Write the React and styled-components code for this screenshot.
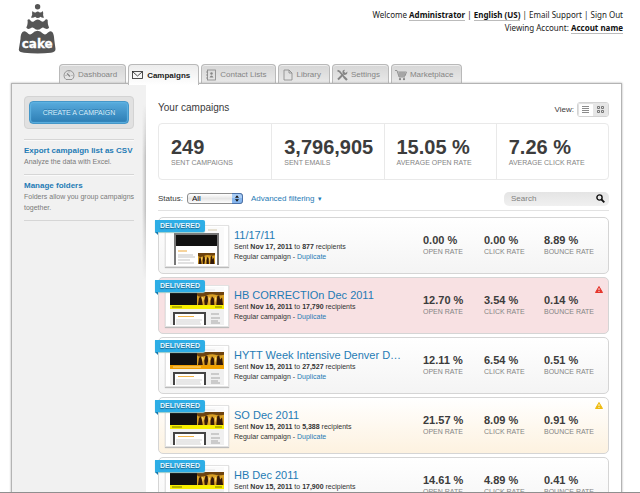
import React from "react";
import styled, { createGlobalStyle, css } from "styled-components";

const Global = createGlobalStyle`
  *, *::before, *::after { box-sizing: border-box; }
  body {
    margin: 0;
    background: #fff;
    color: #3a3a3a;
    font-family: "Liberation Sans", Arial, Helvetica, sans-serif;
    font-size: 8px;
  }
  h1, h2, h3, p, ul, dl, dd { margin: 0; padding: 0; }
  a { color: #1f7bb5; text-decoration: none; }
  button, input, select { font: inherit; }
`;

const Page = styled.div`
  display: flex;
  flex-direction: column;
  height: 100vh;
  overflow: hidden;
  border-bottom: 1px solid #8f8f8f;
`;

const Header = styled.header`
  display: flex;
  flex: none;
  justify-content: space-between;
  align-items: flex-start;
  height: 64px;
  padding: 4px 17px 0 18px;
`;

const Account = styled.div`
  padding-top: 4px;
  font-family: "Noto Sans", "Open Sans", sans-serif;
  font-size: 8px;
  line-height: 13px;
  text-align: right;
  color: #222;
`;

const AccountLink = styled.a`
  color: #222;
  ${(p) =>
    p.$strong &&
    css`
      color: #111;
      font-weight: 700;
      border-bottom: 1px solid #bbb;
    `}
`;

const Tabs = styled.nav`
  display: flex;
  flex: none;
  gap: 2px;
  padding-left: 59px;
  height: 19px;
`;

const Tab = styled.a`
  display: flex;
  align-items: center;
  gap: 3px;
  height: 19px;
  padding: 1px 8px 0 3px;
  border: 1px solid #b9b9b9;
  border-bottom: 0;
  border-radius: 4px 4px 0 0;
  background: linear-gradient(#d6d6d6, #e9e9e9);
  box-shadow: inset 0 1px 0 #eee;
  color: #858585;
  font-size: 8px;
  white-space: nowrap;
  ${(p) =>
    p.$active &&
    css`
      position: relative;
      z-index: 1;
      height: 21px;
      padding-bottom: 1px;
      background: linear-gradient(#ececec, #fff);
      color: #222;
      font-weight: 700;
    `}
`;

const Panel = styled.div`
  display: flex;
  flex: 1 0 auto;
  margin: 0 18px 0 11px;
  border: 1px solid #b4b4b4;
  border-bottom: 0;
  box-shadow: 0 0 2px #aaa;
  background: #fff;
`;

const Sidebar = styled.aside`
  position: relative;
  flex: none;
  width: 134px;
  padding: 12px 12px 0;
  background: #f1f1f1;
  &::after {
    content: "";
    position: absolute;
    top: 20px;
    right: 0;
    width: 4px;
    height: 176px;
    background: linear-gradient(to right, transparent, #bdbdbd);
    mask-image: linear-gradient(transparent, #000 30%, #000 60%, transparent);
  }
`;

const CreateWell = styled.div`
  padding: 4px;
  margin-bottom: 10px;
  border: 1px solid #d3d3d3;
  border-radius: 4px;
  background: #e1e1e1;
`;

const CreateButton = styled.button`
  display: block;
  width: 100%;
  height: 23px;
  padding: 0;
  border: 1px solid #4597c8;
  border-radius: 4px;
  background: linear-gradient(#58abdd, #2c7db4);
  box-shadow: inset 0 0 1px 1px #5fb2e2;
  color: #d9effb;
  font-size: 7px;
  text-shadow: 0 -1px 0 #2a78ad;
`;

const SideItem = styled.section`
  padding: 5px 0 7px;
  border-top: 1px solid #d6d6d6;
  box-shadow: inset 0 1px 0 #fafafa;
  &:last-child {
    border-bottom: 1px solid #d6d6d6;
  }
`;

const SideLink = styled.a`
  display: block;
  font-size: 8px;
  font-weight: 700;
  line-height: 11px;
  white-space: nowrap;
`;

const SideText = styled.p`
  margin-right: -8px;
  color: #7a7a7a;
  font-size: 7px;
  line-height: 11px;
`;

const Main = styled.main`
  flex: 1;
  min-width: 0;
  padding: 18px 12px 0;
`;

const Row = styled.div`
  display: flex;
  align-items: center;
`;

const TitleRow = styled(Row)`
  justify-content: space-between;
  align-items: flex-start;
  height: 21px;
`;

const Title = styled.h1`
  font-size: 10px;
  font-weight: 400;
  line-height: 12px;
`;

const ViewPicker = styled(Row)`
  gap: 3px;
  font-size: 8px;
`;

const Toggle = styled.div`
  display: flex;
  height: 15px;
  border: 1px solid #d3d3d3;
  border-radius: 3px;
  overflow: hidden;
`;

const ToggleButton = styled.button`
  display: grid;
  place-items: center;
  width: 15px;
  padding: 0;
  border: 0;
  background: ${(p) => (p.$active ? "#fff" : "#e6e6e6")};
  color: ${(p) => (p.$active ? "#8b8b8b" : "#777")};
  box-shadow: ${(p) => (p.$active ? "inset 1px 1px 1px #ddd" : "none")};
`;

const Totals = styled.dl`
  display: grid;
  grid-template-columns: repeat(4, 1fr);
  height: 57px;
  border: 1px solid #e9e9e9;
  border-radius: 4px;
`;

const Total = styled.div`
  display: flex;
  flex-direction: column-reverse;
  justify-content: flex-end;
  padding: 13px 0 0 12px;
  white-space: nowrap;
  & + & {
    border-left: 1px solid #e9e9e9;
  }
`;

const TotalValue = styled.dd`
  font-size: 20px;
  font-weight: 700;
  line-height: 21px;
  color: #3c3c3c;
`;

const Caption = styled.dt`
  color: #858585;
  font-size: 7px;
  line-height: 10px;
`;

const Filters = styled(Row)`
  height: 31px;
  margin-bottom: 6px;
  padding-top: 7px;
  border-bottom: 1px solid #e2e2e2;
  font-size: 8px;
`;

const SelectBox = styled.div`
  position: relative;
  display: flex;
  margin: 0 8px 0 4px;
  svg {
    position: absolute;
    top: 0;
    right: 0;
    pointer-events: none;
  }
`;

const Select = styled.select`
  appearance: none;
  width: 56px;
  height: 11px;
  padding: 0 0 0 4px;
  border: 1px solid #8e8e8e;
  border-radius: 3px;
  background: linear-gradient(#fff, #e6e6e6 50%, #fdfdfd);
  color: #111;
  font-size: 8px;
  line-height: 9px;
`;

const FilterLink = styled.a`
  span { font-size: 6px; }
`;

const Search = styled.label`
  display: flex;
  align-items: center;
  width: 105px;
  height: 14px;
  margin-left: auto;
  padding: 0 4px 0 7px;
  border-radius: 5px;
  background: linear-gradient(#e4e4e4, #f0f0f0);
`;

const SearchInput = styled.input`
  flex: 1;
  min-width: 0;
  padding: 0;
  border: 0;
  outline: 0;
  background: transparent;
  font-size: 8px;
  &::placeholder { color: #808080; }
`;

const List = styled.ul`
  display: grid;
  gap: 3px;
  list-style: none;
`;

const tones = {
  plain: "linear-gradient(#fff, #f4f4f4)",
  danger: "#f8e1e3",
  warning: "linear-gradient(#fff, #fdf2e0)",
};

const Card = styled.li`
  position: relative;
  display: flex;
  height: 57px;
  padding: 7px 0 0 6px;
  border: 1px solid #d5d5d5;
  border-radius: 5px;
  background: ${(p) => tones[p.$tone]};
`;

const Badge = styled.span`
  position: absolute;
  top: 2px;
  left: -4px;
  width: 50px;
  height: 12px;
  border-radius: 0 2px 2px 0;
  background: #2eaee6;
  box-shadow: 0 1px 1px #9cc;
  color: #e8f7ff;
  font-size: 7px;
  font-weight: 700;
  line-height: 12px;
  text-align: center;
  text-shadow: 0 1px 1px #17648c;
  &::after {
    content: "";
    position: absolute;
    top: 12px;
    left: 0;
    border-top: 3px solid #167bb0;
    border-left: 3px solid transparent;
  }
`;

const Preview = styled.div`
  flex: none;
  width: 64px;
  height: 42px;
  padding: 1px 4px;
  border: 1px solid #e2e2e2;
  background: #fff;
  box-shadow: 0 1px 1px #bbb;
  svg { display: block; }
`;

const Info = styled.div`
  flex: 1;
  min-width: 0;
  padding: 4px 0 0 5px;
  color: #333;
  font-size: 7px;
  line-height: 10px;
  white-space: nowrap;
`;

const Name = styled.h2`
  font-size: 11px;
  font-weight: 400;
  line-height: 13px;
`;

const Rates = styled.dl`
  display: grid;
  flex: none;
  grid-template-columns: 61px 60px 64px;
  padding-top: 9px;
`;

const Rate = styled.div`
  display: flex;
  flex-direction: column-reverse;
  justify-content: flex-end;
  white-space: nowrap;
`;

const RateValue = styled.dd`
  font-size: 11px;
  font-weight: 700;
  line-height: 13px;
  color: #3c3c3c;
`;

const Alert = styled.svg`
  position: absolute;
  top: ${(p) => (p.$tone === "danger" ? 8 : 4)}px;
  right: 5px;
`;

const Logo = () => (
  <svg width="38" height="50" viewBox="0 0 38 50" role="img" aria-label="cake">
    <g fill="#555">
      <circle cx="19.600" cy="2.800" r="2.700" />
      <path d="M14.500 7q1.800 2 3.200 1.500 2-2 4 0 1.400.5 3-1.500 1 2.500.4 4 .3 1.500.9 2.500-1.500 1-3.500-.8-1.200 1.300-2.800 1.300-1.500 0-2.500-1.300-2 1.800-4.200.8.800-1.500 1.200-2.800-.4-2 .3-3.700z" />
      <path d="M9.500 16q1.500-1.500 3 .5 1.700 2 3.500.7 3.800-3.400 7.300 0 2 1.200 3.400-.7 1.500-2 3-.5 0 2.500.2 4 .5 2 1.200 3.500-1 2.500-4.600.8-1.500-1.500-3.200 0-3.700 3-7.200 0-2-1.500-3.500 0-3.200 1.600-4.300-.8 1-2 1.200-3.500.4-2 0-4z" />
      <path d="M4.500 28q2.500-2 4.800.8 2.200 3 4.500 1 5.700-6 11.400 0 2.300 2 4.500-1 2.300-2.600 4.600-.8 1.700 2 2 8l1.200 9q0 3.200-4.500 3.700-13 1.500-27 0Q.7 48.500.8 45.500L2.500 35q0-5 2-7z" />
    </g>
    <text x="19.200" y="43.500" textAnchor="middle" fill="#fff" stroke="#fff" strokeWidth=".3" fontFamily="DejaVu Sans, sans-serif" fontWeight="700" fontSize="12">cake</text>
  </svg>
);

const iconArt = {
  Dashboard: (
    <>
      <path d="M3 10.500a5 5 0 1 1 6 0z" fill="none" />
      <path d="M4 4.500l3 3" strokeWidth="1.300" fill="none" />
      <path d="M2.500 6.500h1M8.500 6.500h1M6 2.500v1" fill="none" />
    </>
  ),
  Campaigns: (
    <>
      <rect x=".5" y="2.500" width="10" height="7" fill="none" />
      <path d="M1 3l4.500 4L10 3" fill="none" />
    </>
  ),
  "Contact Lists": (
    <>
      <rect x="2.500" y="1" width="8" height="10" fill="none" />
      <circle cx="6.500" cy="4.500" r="1.200" fill="currentColor" stroke="none" />
      <path d="M4.500 8.500q2-4 4 0z" fill="currentColor" stroke="none" />
      <path d="M1 3h2M1 6h2M1 9h2" fill="none" />
    </>
  ),
  Library: <path d="M2 1h5l3 3v7H2zM7 1v3h3" fill="none" />,
  Settings: (
    <>
      <path d="M1.500 1.500l2 1 5 6" strokeWidth="1.600" fill="none" />
      <path d="M2 10.500l5-5" strokeWidth="2" fill="none" />
      <path d="M11.500 2.500L9.500 4 8 2.800 9 .8Q6 .8 6.500 4T11 5z" fill="currentColor" stroke="none" />
      <path d="M8 8l3 3" strokeWidth="2.200" fill="none" />
    </>
  ),
  Marketplace: (
    <>
      <path d="M0 1.500h2l2 6.500h6M2.500 3h9L10 7H4M5 3v4M7 3v4M9 3v4M3 5h8" fill="none" />
      <circle cx="5" cy="10.200" r="1.100" fill="currentColor" stroke="none" />
      <circle cx="9" cy="10.200" r="1.100" fill="currentColor" stroke="none" />
    </>
  ),
};

const TabIcon = ({ name }) => (
  <svg width="12" height="12" viewBox="0 0 12 12" stroke="currentColor" strokeWidth=".8" aria-hidden="true">
    {iconArt[name]}
  </svg>
);

const People = ({ x, y, w, h }) => (
  <svg x={x} y={y} width={w} height={h} viewBox="0 0 28 12" preserveAspectRatio="none">
    <rect width="28" height="12" fill="#d9a024" />
    <path d="M0 0h28v2.500q-5 1-9 0t-10 1T0 3z" fill="#6d430f" />
    <path d="M1 12l1-6 1.500-2 1.500 3 1 5zM8 12l-.5-4L9 3l2 1 .5 4-1 4zM14 12V8l1.500-4 2 2 .5 6zM20 12l1-8 2-1 1 4 2-2 1 7z" fill="#33190a" />
    <path d="M5 4l2 2-1 3zM12 4l1.500 2-1 5zM18.500 4l1.500 2-1 4z" fill="#fbd873" />
  </svg>
);

const Thumb = ({ kind }) => {
  if (kind === "single")
    return (
      <svg width="54" height="38" viewBox="0 0 54 38" aria-hidden="true">
        <rect width="54" height="38" fill="#fafafa" />
        <path d="M38 3h9" stroke="#d2c7a8" />
        <path d="M5 38V7h43v31" fill="#fff" stroke="#777" strokeWidth="2" />
        <rect x="6" y="8" width="41" height="11" fill="#111" />
        <path d="M8 24h9" stroke="#eda83b" />
        <path d="M8 28h15M8 30h17M8 33h12M8 36h16" stroke="#aaa" strokeWidth=".7" />
        <People x={28} y={26} w={17} h={11} />
      </svg>
    );
  const orange = kind === "orange";
  return (
    <svg width="54" height="38" viewBox="0 0 54 38" aria-hidden="true">
      <rect width="54" height="38" fill="#fafafa" />
      <path d="M35 3h10" stroke="#ddd" strokeWidth=".7" />
      <rect y="5" width="54" height="13" fill="#111" />
      <People x={27} y={5} w={27} h={13} />
      <rect y="18" width="54" height="4" fill={orange ? "#f0a000" : "#f7ee00"} />
      <path d={orange ? "M3 20h28" : "M2 20h10M45 20h7"} stroke={orange ? "#ffd98a" : "#777a00"} />
      <rect y="22" width="54" height="16" fill="#f0f0f0" />
      <path d="M4 38V26h31v12" fill="#fff" stroke="#444" strokeWidth="2" />
      <path d="M8 29.500h16" stroke="#efb248" strokeWidth="1" />
      <path d="M6 33h26M6 35h24M6 37h25" stroke="#bbb" strokeWidth=".7" />
      <path d="M41 27h8M41 31h9M41 34h7M41 36h9" stroke="#888" strokeWidth=".7" />
    </svg>
  );
};

const tabs = ["Dashboard", "Campaigns", "Contact Lists", "Library", "Settings", "Marketplace"];

const totals = [
  ["249", "SENT CAMPAIGNS"],
  ["3,796,905", "SENT EMAILS"],
  ["15.05 %", "AVERAGE OPEN RATE"],
  ["7.26 %", "AVERAGE CLICK RATE"],
];

const campaigns = [
  { name: "11/17/11", date: "Nov 17, 2011", count: "877", rates: ["0.00 %", "0.00 %", "8.89 %"], tone: "plain", kind: "single" },
  { name: "HB CORRECTIOn Dec 2011", date: "Nov 16, 2011", count: "17,790", rates: ["12.70 %", "3.54 %", "0.14 %"], tone: "danger", kind: "yellow" },
  { name: "HYTT Week Intensive Denver D…", date: "Nov 15, 2011", count: "27,527", rates: ["12.11 %", "6.54 %", "0.51 %"], tone: "plain", kind: "orange" },
  { name: "SO Dec 2011", date: "Nov 15, 2011", count: "5,388", rates: ["21.57 %", "8.09 %", "0.91 %"], tone: "warning", kind: "yellow" },
  { name: "HB Dec 2011", date: "Nov 15, 2011", count: "17,900", rates: ["14.61 %", "4.89 %", "0.41 %"], tone: "plain", kind: "yellow" },
];

const rateLabels = ["OPEN RATE", "CLICK RATE", "BOUNCE RATE"];

const Campaign = ({ item }) => (
  <Card $tone={item.tone}>
    <Preview><Thumb kind={item.kind} /></Preview>
    <Badge>DELIVERED</Badge>
    <Info>
      <Name><a href="#campaign">{item.name}</a></Name>
      <p>Sent <b>{item.date}</b> to <b>{item.count}</b> recipients</p>
      <p>Regular campaign - <a href="#duplicate">Duplicate</a></p>
    </Info>
    <Rates>
      {item.rates.map((value, i) => (
        <Rate key={rateLabels[i]}>
          <Caption>{rateLabels[i]}</Caption>
          <RateValue>{value}</RateValue>
        </Rate>
      ))}
    </Rates>
    {item.tone !== "plain" && (
      <Alert $tone={item.tone} width="8" height="7" viewBox="0 0 8 7" role="img" aria-label="Alert">
        <path d="M4 .5L7.500 6.500H.5z" fill={item.tone === "danger" ? "#e5352b" : "#eebb10"} stroke={item.tone === "danger" ? "#e5352b" : "#eebb10"} strokeLinejoin="round" />
        <path d="M4 2.200v2M4 5v1" stroke="#fff" strokeWidth=".9" />
      </Alert>
    )}
  </Card>
);

export default function App() {
  return (
    <Page>
      <Global />
      <Header>
        <Logo />
        <Account>
          <div>
            Welcome <AccountLink $strong href="#user">Administrator</AccountLink> |{" "}
            <AccountLink $strong href="#language">English (US)</AccountLink> |{" "}
            <AccountLink href="#support">Email Support</AccountLink> |{" "}
            <AccountLink href="#signout">Sign Out</AccountLink>
          </div>
          <div>
            Viewing Account: <AccountLink $strong href="#account">Accout name</AccountLink>
          </div>
        </Account>
      </Header>
      <Tabs>
        {tabs.map((name) => (
          <Tab key={name} href="#tab" $active={name === "Campaigns"}>
            <TabIcon name={name} />
            {name}
          </Tab>
        ))}
      </Tabs>
      <Panel>
        <Sidebar>
          <CreateWell><CreateButton type="button">CREATE A CAMPAIGN</CreateButton></CreateWell>
          <SideItem>
            <SideLink href="#export">Export campaign list as CSV</SideLink>
            <SideText>Analyze the data with Excel.</SideText>
          </SideItem>
          <SideItem>
            <SideLink href="#folders">Manage folders</SideLink>
            <SideText>Folders allow you group campaigns together.</SideText>
          </SideItem>
        </Sidebar>
        <Main>
          <TitleRow>
            <Title>Your campaigns</Title>
            <ViewPicker>
              View:
              <Toggle>
                <ToggleButton type="button" $active aria-label="List view">
                  <svg width="7" height="7" viewBox="0 0 7 7" stroke="currentColor"><path d="M0 .5h7M0 2.500h7M0 4.500h7M0 6.500h7" /></svg>
                </ToggleButton>
                <ToggleButton type="button" aria-label="Grid view">
                  <svg width="7" height="7" viewBox="0 0 7 7" fill="none" stroke="currentColor"><path d="M.5 .5h2v2h-2zM4.500 .5h2v2h-2zM.5 4.500h2v2h-2zM4.500 4.500h2v2h-2z" /></svg>
                </ToggleButton>
              </Toggle>
            </ViewPicker>
          </TitleRow>
          <Totals>
            {totals.map(([value, label]) => (
              <Total key={label}>
                <Caption>{label}</Caption>
                <TotalValue>{value}</TotalValue>
              </Total>
            ))}
          </Totals>
          <Filters>
            <label htmlFor="status">Status:</label>
            <SelectBox>
              <Select id="status"><option>All</option></Select>
              <svg width="11" height="11" viewBox="0 0 11 11" aria-hidden="true">
                <path d="M0 .5h8q2.500 0 2.500 2.500v5q0 2.500-2.500 2.500H0z" fill="#86b6ee" />
                <path d="M0 1h8q2 0 2 2v2H0z" fill="#a9cdf6" />
                <path d="M0 .5h8q2.500 0 2.500 2.500v5q0 2.500-2.500 2.500H0" fill="none" stroke="#4d72a8" />
                <path d="M3 4.800h4L5 2.300zM3 6.300h4L5 8.800z" fill="#111" />
              </svg>
            </SelectBox>
            <FilterLink href="#filter">Advanced filtering <span>▼</span></FilterLink>
            <Search>
              <SearchInput type="search" placeholder="Search" aria-label="Search" />
              <svg width="9" height="9" viewBox="0 0 9 9" fill="none" stroke="#111" aria-hidden="true">
                <circle cx="3.500" cy="3.500" r="2.600" strokeWidth="1.400" />
                <path d="M5.500 5.500L8.300 8.300" strokeWidth="1.800" />
              </svg>
            </Search>
          </Filters>
          <List>
            {campaigns.map((item) => <Campaign key={item.name} item={item} />)}
          </List>
        </Main>
      </Panel>
    </Page>
  );
}
